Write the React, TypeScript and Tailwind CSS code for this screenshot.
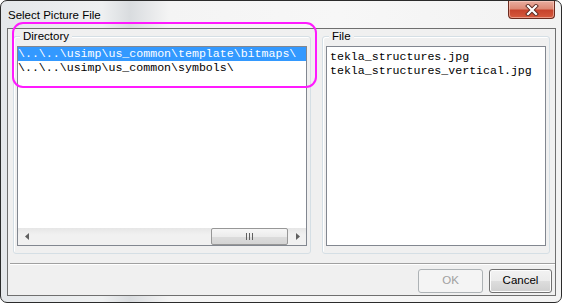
import React from "react";

const dirs = [
  { path: "\\..\\..\\usimp\\us_common\\template\\bitmaps\\", selected: true },
  { path: "\\..\\..\\usimp\\us_common\\symbols\\", selected: false },
];

const files = ["tekla_structures.jpg", "tekla_structures_vertical.jpg"];

function GroupBox({ label, className, children }: { label: string; className: string; children: React.ReactNode }) {
  return (
    <div className={`relative h-[218px] rounded-[3px] border border-[#d5dfe5] px-[3px] pt-[9px] pb-[7px] shadow-[inset_1px_1px_0_#ffffff] ${className}`}>
      <span className="absolute -top-[8px] left-[6px] bg-[#f0f0f0] px-[3px] text-[11.5px] leading-[14px] text-black">
        {label}
      </span>
      {children}
    </div>
  );
}

function HScrollBar() {
  return (
    <div className="flex h-[17px] bg-[linear-gradient(#e6e6e6,#f1f1f1_40%,#f1f1f1)]">
      <div className="flex w-[17px] items-center justify-center">
        <svg width="4" height="7" viewBox="0 0 4 7">
          <path d="M4 0 L0 3.5 L4 7 Z" fill="#606060" />
        </svg>
      </div>
      <div className="w-[176px]" />
      <div className="flex w-[77px] items-center justify-center rounded-[2px] border border-[#979797] bg-[linear-gradient(#f6f6f6,#ececec_50%,#dcdcdc_51%,#d4d4d4)]">
        <div className="flex gap-[2px]">
          <div className="h-[7px] w-px bg-[#606060]" />
          <div className="h-[7px] w-px bg-[#606060]" />
          <div className="h-[7px] w-px bg-[#606060]" />
        </div>
      </div>
      <div className="flex-1" />
      <div className="flex w-[17px] items-center justify-center">
        <svg width="4" height="7" viewBox="0 0 4 7">
          <path d="M0 0 L4 3.5 L0 7 Z" fill="#606060" />
        </svg>
      </div>
    </div>
  );
}

export default function App() {
  return (
    <div className="relative h-[303px] w-[562px] overflow-hidden bg-white font-['Liberation_Sans',Arial,sans-serif]">
      <div className="flex h-full w-full flex-col rounded-[7px] border border-[#2b2b2b] bg-[linear-gradient(90deg,#e4e7ea_0%,#eef0f1_18%,#d9dcdf_23%,#f4f4f4_30%,#f7f7f7_60%,#f2f2f2_100%)]">
        {/* title bar */}
        <div className="flex h-[27px] items-start">
          <span className="pl-[7px] pt-[7px] text-[11.5px] leading-[14px] text-black">Select Picture File</span>
          <div className="ml-auto mr-[6px] flex h-[18px] w-[47px] items-center justify-center rounded-b-[4px] border border-t-0 border-[#6b2a1e] bg-[linear-gradient(#e9ad9f,#dd8a76_45%,#c7432c_55%,#d65a3e)] shadow-[inset_0_0_0_1px_rgba(255,220,210,0.5)]">
            <svg width="14" height="12" viewBox="0 0 14 12">
              <path d="M3 2 L11 10 M11 2 L3 10" stroke="#5a2a22" strokeWidth="4" strokeLinecap="square" />
              <path d="M3 2 L11 10 M11 2 L3 10" stroke="#ffffff" strokeWidth="2.2" strokeLinecap="square" />
            </svg>
          </div>
        </div>

        {/* client area */}
        <div className="ml-[6px] mr-[5px] flex h-[268px] flex-col border border-[#6f6f6f] bg-[#f0f0f0]">
          <div className="mt-[7px] flex gap-[11px] px-[5px]">
            <GroupBox label="Directory" className="w-[298px]">
              <div className="flex h-[200px] flex-col border border-[#828790] bg-white">
                <div className="flex-1 font-['Liberation_Mono','Courier_New',monospace] text-[11.6px] leading-[14px]">
                  {dirs.map((d) => (
                    <div
                      key={d.path}
                      className={`h-[14px] whitespace-nowrap ${d.selected ? "bg-[#3399ff] text-white" : "text-black"}`}
                    >
                      {d.path}
                    </div>
                  ))}
                </div>
                <HScrollBar />
              </div>
            </GroupBox>
            <GroupBox label="File" className="w-[228px]">
              <div className="h-[200px] border border-[#828790] bg-white pl-[3px] pt-[3px] font-['Liberation_Mono','Courier_New',monospace] text-[11.6px] leading-[14px] text-black">
                {files.map((f) => (
                  <div key={f} className="h-[14px] whitespace-nowrap">
                    {f}
                  </div>
                ))}
              </div>
            </GroupBox>
          </div>

          <div className="mt-[9px] ml-[2px] h-[2px] border-t border-b border-t-[#a0a0a0] border-b-white" />

          <div className="mt-[4px] flex justify-end gap-[6px] pr-[3px]">
            <button className="h-[24px] w-[65px] rounded-[3px] border border-[#adb2b5] bg-[#f4f4f4] text-[11.5px] text-[#a0a0a0]">
              OK
            </button>
            <button className="h-[24px] w-[63px] rounded-[3px] border border-[#707070] bg-[linear-gradient(#f2f2f2,#ebebeb_50%,#dddddd_51%,#cfcfcf)] text-[11.5px] text-black shadow-[inset_0_0_0_1px_#fcfcfc]">
              Cancel
            </button>
          </div>
        </div>
      </div>

      {/* magenta annotation around the directory list */}
      <div className="pointer-events-none absolute left-[12px] top-[22px] h-[66px] w-[305px] rounded-[11px] border-[2.5px] border-[#ff1aff]" />
    </div>
  );
}
